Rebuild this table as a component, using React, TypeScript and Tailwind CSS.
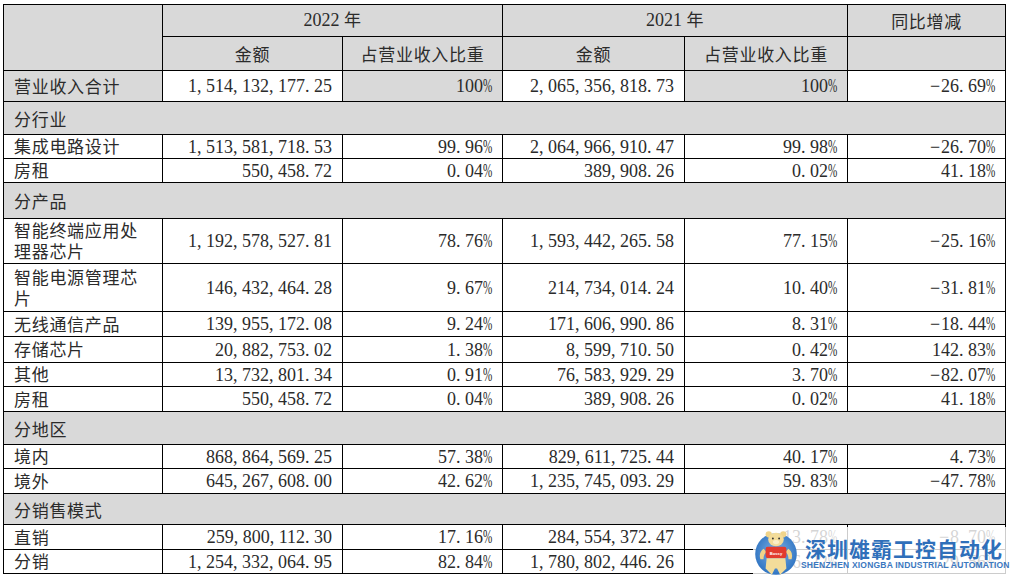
import React from "react";

type Row =
  | { kind: "section"; label: string; h: string }
  | {
      kind: "data" | "total";
      label: string;
      a: string;
      p: string;
      b: string;
      q: string;
      c: string;
      h: string;
    };

const rows: Row[] = [
  { kind: "total", label: "营业收入合计", a: "1,514,132,177.25", p: "100%", b: "2,065,356,818.73", q: "100%", c: "-26.69%", h: "h-[31px]" },
  { kind: "section", label: "分行业", h: "h-[33px]" },
  { kind: "data", label: "集成电路设计", a: "1,513,581,718.53", p: "99.96%", b: "2,064,966,910.47", q: "99.98%", c: "-26.70%", h: "h-[24px]" },
  { kind: "data", label: "房租", a: "550,458.72", p: "0.04%", b: "389,908.26", q: "0.02%", c: "41.18%", h: "h-[24px]" },
  { kind: "section", label: "分产品", h: "h-[36px]" },
  { kind: "data", label: "智能终端应用处理器芯片", a: "1,192,578,527.81", p: "78.76%", b: "1,593,442,265.58", q: "77.15%", c: "-25.16%", h: "h-[45px]" },
  { kind: "data", label: "智能电源管理芯片", a: "146,432,464.28", p: "9.67%", b: "214,734,014.24", q: "10.40%", c: "-31.81%", h: "h-[48px]" },
  { kind: "data", label: "无线通信产品", a: "139,955,172.08", p: "9.24%", b: "171,606,990.86", q: "8.31%", c: "-18.44%", h: "h-[25px]" },
  { kind: "data", label: "存储芯片", a: "20,882,753.02", p: "1.38%", b: "8,599,710.50", q: "0.42%", c: "142.83%", h: "h-[26px]" },
  { kind: "data", label: "其他", a: "13,732,801.34", p: "0.91%", b: "76,583,929.29", q: "3.70%", c: "-82.07%", h: "h-[23px]" },
  { kind: "data", label: "房租", a: "550,458.72", p: "0.04%", b: "389,908.26", q: "0.02%", c: "41.18%", h: "h-[25px]" },
  { kind: "section", label: "分地区", h: "h-[33px]" },
  { kind: "data", label: "境内", a: "868,864,569.25", p: "57.38%", b: "829,611,725.44", q: "40.17%", c: "4.73%", h: "h-[24px]" },
  { kind: "data", label: "境外", a: "645,267,608.00", p: "42.62%", b: "1,235,745,093.29", q: "59.83%", c: "-47.78%", h: "h-[25px]" },
  { kind: "section", label: "分销售模式", h: "h-[31px]" },
  { kind: "data", label: "直销", a: "259,800,112.30", p: "17.16%", b: "284,554,372.47", q: "13.78%", c: "-8.70%", h: "h-[25px]" },
  { kind: "data", label: "分销", a: "1,254,332,064.95", p: "82.84%", b: "1,780,802,446.26", q: "86.22%", c: "-29.56%", h: "h-[24px]" },
];

function Num({ v }: { v: string }) {
  return (
    <span className="whitespace-nowrap">
      {v.split("").map((ch, i) => {
        if (ch === "," || ch === ".")
          return (
            <span key={i} className="inline-block w-[9px] text-left">
              {ch}
            </span>
          );
        if (ch === "%")
          return (
            <span key={i} className="inline-block w-[9px] text-left">
              <span className="inline-block origin-left scale-x-[0.62]">%</span>
            </span>
          );
        if (ch === "-")
          return (
            <span key={i} className="inline-block w-[18px] text-right pr-[1px]">
              −
            </span>
          );
        return <span key={i}>{ch}</span>;
      })}
    </span>
  );
}

const cell = "border border-black align-middle p-0";
const zh = "font-['Noto_Sans_CJK_SC',sans-serif] text-[17px] tracking-[0.7px] leading-[21px]";
const num = "font-['Liberation_Serif','Noto_Sans_CJK_SC',serif] text-[18px] text-right pr-[10px] leading-none";
const gray = "bg-[#d9d9d9]";

function Logo() {
  return (
    <svg width="46" height="52" viewBox="0 0 44 50" className="shrink-0">
      <defs>
        <radialGradient id="lg" cx="50%" cy="45%" r="55%">
          <stop offset="0%" stopColor="#7fb2e6" />
          <stop offset="100%" stopColor="#2f74c2" />
        </radialGradient>
      </defs>
      <circle cx="22" cy="26" r="20" fill="url(#lg)" />
      <circle cx="15" cy="7" r="3" fill="#f0d48a" />
      <circle cx="29" cy="7" r="3" fill="#f0d48a" />
      <ellipse cx="22" cy="12" rx="7.5" ry="6.5" fill="#f3dc9a" />
      <ellipse cx="22" cy="14.5" rx="3" ry="2" fill="#fbeec6" />
      <circle cx="19" cy="11" r="0.9" fill="#333" />
      <circle cx="25" cy="11" r="0.9" fill="#333" />
      <path d="M10 21 Q5 25 7 31 L10 31 Q10 26 13 24 Z" fill="#f0d48a" />
      <path d="M34 21 Q39 25 37 31 L34 31 Q34 26 31 24 Z" fill="#f0d48a" />
      <rect x="12" y="19" width="20" height="11" rx="2" fill="#e23b2e" />
      <text x="22" y="26.5" textAnchor="middle" fontSize="4" fill="#fff" fontFamily="Liberation Sans" fontWeight="bold">
        Bossy
      </text>
      <path d="M13 30 L31 30 L32 40 L26 46 L23 40 L21 40 L18 46 L12 40 Z" fill="#f3dc9a" />
    </svg>
  );
}

export default function App() {
  return (
    <div className="relative w-[1013px] h-[579px] bg-white overflow-hidden text-[#2b2b2b]">
      <div className="pl-[3px] pt-[4px]">
        <table className="table-fixed border-collapse w-[1002px]">
          <colgroup>
            <col className="w-[159px]" />
            <col className="w-[180px]" />
            <col className="w-[160px]" />
            <col className="w-[182px]" />
            <col className="w-[163px]" />
            <col className="w-[158px]" />
          </colgroup>
          <tbody>
            <tr className="h-[32px]">
              <td rowSpan={2} className={`${cell} ${gray}`}></td>
              <td colSpan={2} className={`${cell} ${gray} text-center`}>
                <span className="font-['Liberation_Serif',serif] text-[18px]">2022 </span>
                <span className={zh}>年</span>
              </td>
              <td colSpan={2} className={`${cell} ${gray} text-center`}>
                <span className="font-['Liberation_Serif',serif] text-[18px]">2021 </span>
                <span className={zh}>年</span>
              </td>
              <td className={`${cell} ${gray} text-center ${zh}`}>同比增减</td>
            </tr>
            <tr className="h-[34px]">
              <td className={`${cell} ${gray} text-center ${zh}`}>金额</td>
              <td className={`${cell} ${gray} text-center ${zh}`}>占营业收入比重</td>
              <td className={`${cell} ${gray} text-center ${zh}`}>金额</td>
              <td className={`${cell} ${gray} text-center ${zh}`}>占营业收入比重</td>
              <td className={`${cell} ${gray}`}></td>
            </tr>
            {rows.map((r, i) => {
              if (r.kind === "section") {
                return (
                  <tr key={i} className={r.h}>
                    <td colSpan={6} className={`${cell} ${gray} ${zh} pl-[10px]`}>
                      {r.label}
                    </td>
                  </tr>
                );
              }
              const isTotal = r.kind === "total";
              return (
                <tr key={i} className={r.h}>
                  <td className={`${cell} ${zh} pl-[10px] pr-[10px] pb-[2px] ${isTotal ? gray : ""}`}>
                    {r.label}
                  </td>
                  <td className={`${cell} ${num}`}>
                    <Num v={r.a} />
                  </td>
                  <td className={`${cell} ${num} ${isTotal ? gray : ""}`}>
                    <Num v={r.p} />
                  </td>
                  <td className={`${cell} ${num}`}>
                    <Num v={r.b} />
                  </td>
                  <td className={`${cell} ${num} ${isTotal ? gray : ""}`}>
                    <Num v={r.q} />
                  </td>
                  <td className={`${cell} ${num}`}>
                    <Num v={r.c} />
                  </td>
                </tr>
              );
            })}
          </tbody>
        </table>
      </div>

      {/* watermark */}
      <div className="absolute left-[753px] top-[527px] w-[260px] h-[52px] bg-white/80 flex items-center">
        <Logo />
        <div className="flex flex-col ml-[6px]">
          <span className="font-['Noto_Sans_CJK_SC',sans-serif] font-bold text-[21px] leading-[24px] tracking-[1px] text-[#2f6fba]">
            深圳雄霸工控自动化
          </span>
          <span className="font-['Liberation_Sans',sans-serif] font-bold text-[8.5px] leading-[10px] text-[#3b78c0] -ml-[4px] tracking-[0.2px] whitespace-nowrap">
            SHENZHEN XIONGBA INDUSTRIAL AUTOMATION
          </span>
        </div>
      </div>
    </div>
  );
}
